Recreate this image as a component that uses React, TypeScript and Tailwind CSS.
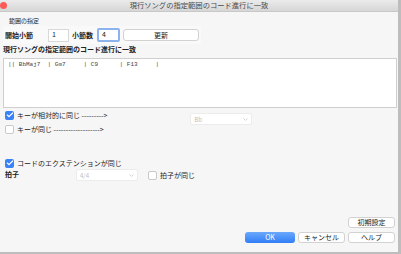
import { Check, ChevronDown } from 'lucide-react';

const JP = { fontFamily: '"Noto Sans CJK JP", "Noto Sans", sans-serif' };

function Box({ checked }: { checked?: boolean }) {
  return checked ? (
    <span className="flex h-[9px] w-[9px] items-center justify-center rounded-[2px] bg-[#3b82f6]">
      <Check size={8} strokeWidth={3.5} className="text-white" />
    </span>
  ) : (
    <span className="h-[9px] w-[9px] rounded-[2px] border border-[#c9c9c9] bg-white" />
  );
}

function Btn({ label, primary, w = 'w-[47px]' }: { label: string; primary?: boolean; w?: string }) {
  return (
    <button
      className={
        primary
          ? `${w} flex h-[11px] items-center justify-center rounded-[3px] bg-gradient-to-b from-[#6aa8fb] to-[#2f7df6] text-[7px] text-white`
          : `${w} flex h-[11px] items-center justify-center rounded-[3px] border border-[#d2d2d2] bg-white text-[7px] text-[#222]`
      }
    >
      {label}
    </button>
  );
}

function Select({ value, w }: { value: string; w: string }) {
  return (
    <div className={`${w} flex h-[12px] items-center justify-between rounded-[2px] border border-[#ececec] bg-white pl-[3px] pr-[2px]`}>
      <span className="text-[6px] text-[#bdbdbd]">{value}</span>
      <ChevronDown size={7} className="text-[#b5b5b5]" />
    </div>
  );
}

export default function App() {
  return (
    <div
      className="flex h-[254px] w-[401px] flex-col overflow-hidden border-r-[3px] border-b-[2px] border-[#bdbdbd] bg-[#f6f6f6] text-[#222]"
      style={JP}
    >
      <div className="relative flex h-[12px] shrink-0 items-center justify-center border-b border-[#c8c8c8] bg-gradient-to-b from-[#ebebeb] to-[#d6d6d6]">
        <span className="absolute left-[0px] top-[2px] h-[7px] w-[7px] rounded-full bg-[#fc5b57]" />
        <span className="text-[7.3px] text-[#4a4a4a]">現行ソングの指定範囲のコード進行に一致</span>
      </div>

      <div className="flex flex-col px-[3px]">
        <div className="ml-[6px] mt-[5px] text-[6px] leading-[8px]">範囲の指定</div>
        <div className="mt-[1px] flex h-[18px] w-[198px] items-center rounded-[2px] bg-[#f9f9f9] pl-[2px]">
          <span className="w-[40px] text-[7px] font-bold">開始小節</span>
          <div className="ml-[3px] flex h-[13px] w-[21px] items-end border border-[#d8d8d8] bg-white pb-[1px] pl-[3px] text-[7px]">1</div>
          <span className="ml-[3px] text-[7px] font-bold">小節数</span>
          <div className="ml-[4px] flex h-[14px] w-[23px] items-end rounded-[2px] border-2 border-[#8db3ee] bg-white pb-[1px] pl-[3px] text-[7px]">4</div>
          <Btn label="更新" w="ml-[3px] w-[76px] h-[12px]" />
        </div>

        <div className="mt-[1px] text-[7px] font-bold leading-[9px]">現行ソングの指定範囲のコード進行に一致</div>
        <div className="mt-[4px] h-[50px] w-[394px] border border-[#cfcfcf] bg-white px-[4px] pt-[2px]">
          <pre className="text-[6px] leading-[8px] text-[#444]" style={{ fontFamily: '"Liberation Mono", monospace' }}>
            {'|| BbMaj7  | Gm7     | C9      | F13     |'}
          </pre>
        </div>

        <div className="mt-[2px] flex items-start">
          <div className="flex flex-col gap-[4px]">
            <label className="flex items-center gap-[3px] pl-[2px] text-[7px] leading-[10px]">
              <Box checked />
              キーが相対的に同じ ---------&gt;
            </label>
            <label className="flex items-center gap-[3px] pl-[2px] text-[7px] leading-[10px]">
              <Box />
              キーが同じ -------------------&gt;
            </label>
          </div>
          <div className="ml-[83px] mt-[3px]">
            <Select value="Bb" w="w-[62px]" />
          </div>
        </div>

        <label className="mt-[24px] flex items-center gap-[3px] pl-[2px] text-[7px] leading-[10px]">
          <Box checked />
          コードのエクステンションが同じ
        </label>
        <div className="mt-[1px] flex items-start">
          <span className="w-[73px] pl-[2px] text-[7px] font-bold leading-[10px]">拍子</span>
          <div className="flex items-center">
            <Select value="4/4" w="w-[62px]" />
            <label className="ml-[10px] flex items-center gap-[3px] text-[7px]">
              <Box />
              拍子が同じ
            </label>
          </div>
        </div>

        <div className="mt-[36px] flex justify-end">
          <Btn label="初期設定" />
        </div>
        <div className="mt-[4px] flex justify-end gap-[3px]">
          <Btn label="OK" primary w="w-[50px]" />
          <Btn label="キャンセル" />
          <Btn label="ヘルプ" />
        </div>
      </div>
    </div>
  );
}
